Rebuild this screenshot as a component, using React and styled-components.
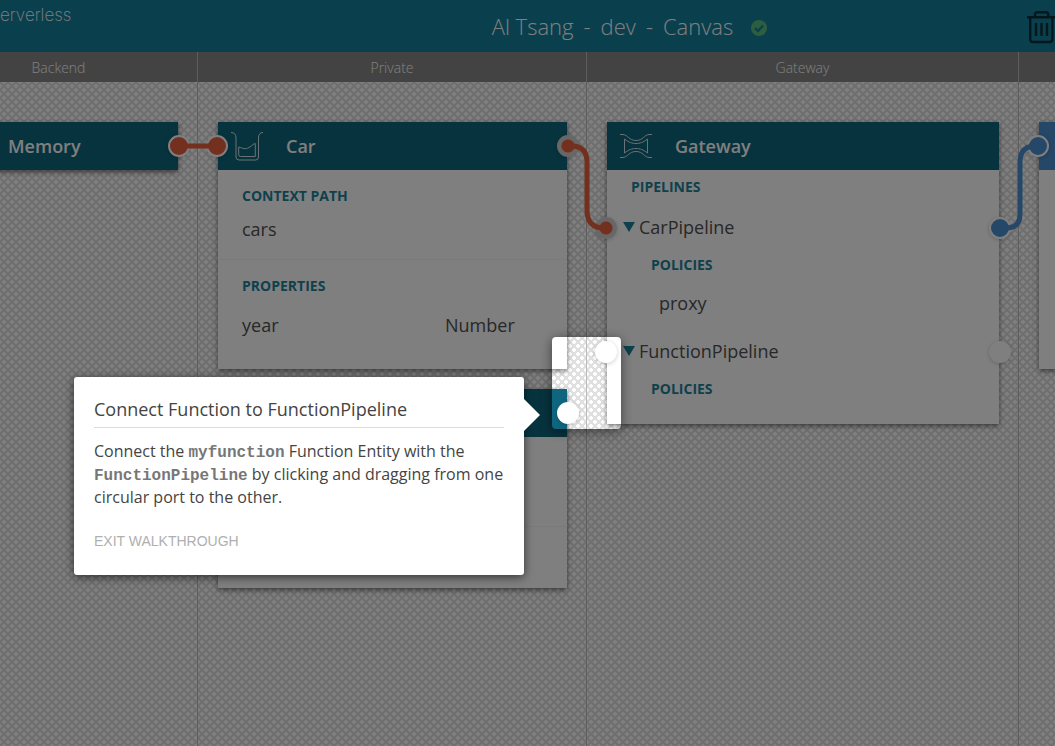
import React from "react";
import styled, { createGlobalStyle, css } from "styled-components";

const GlobalStyle = createGlobalStyle`
  *, *::before, *::after { box-sizing: border-box; }
  html, body { margin: 0; overflow: hidden; }
  body { font-family: "Open Sans", "Noto Sans", sans-serif; color: #505050; }
  button { font: inherit; color: inherit; background: none; border: 0; padding: 0; margin: 0; cursor: pointer; }
  h1, h2, h3, p, dl, dd { margin: 0; }
`;

const ORANGE = "#e6603e";
const BLUE = "#4a90d0";
const TEAL = "#0e667e";

const Page = styled.div`
  position: relative;
  min-height: 100vh;
  display: flex;
  flex-direction: column;
  overflow: hidden;
`;

const TopBar = styled.header`
  height: 52px;
  flex: none;
  display: grid;
  grid-template-columns: 1fr auto 1fr;
  align-items: center;
  background: #147f9b;
  color: #fff;
`;

const Brand = styled.span`
  font: 200 17px/20px Inter, sans-serif;
  align-self: start;
  margin-top: 5px;
`;

const Title = styled.h1`
  display: flex;
  align-items: center;
  gap: 10px;
  margin-left: 204px;
  font-size: 22px;
  line-height: 32px;
  font-weight: 300;
  svg { margin: 4px 0 0 8px; }
`;

const TrashButton = styled.button`
  justify-self: end;
  width: 28px;
  height: 32px;
  color: #06303b;
  svg { display: block; overflow: visible; }
`;

const Lanes = styled.main`
  position: relative;
  flex: 1;
  display: flex;
  margin-left: -80px;
`;

const Lane = styled.section`
  flex: ${(p) => (p.$width ? `0 0 ${p.$width}px` : "1 0 280px")};
  display: flex;
  flex-direction: column;
  border-right: 1px solid #bababa;
`;

const LaneTitle = styled.h2`
  flex: none;
  height: 30px;
  background: #868686;
  color: #fff;
  font-size: 14px;
  line-height: 32px;
  font-weight: 300;
  text-align: center;
`;

const LaneBody = styled.div`
  flex: 1;
  display: flex;
  flex-direction: column;
  gap: 20px;
  padding: 40px 19px 40px 20px;
  background-color: #fff;
  background-image:
    linear-gradient(45deg, #e0e0e0 12%, transparent 12% 38%, #e0e0e0 38% 62%, transparent 62% 88%, #e0e0e0 88%),
    linear-gradient(-45deg, #e0e0e0 12%, transparent 12% 38%, #e0e0e0 38% 62%, transparent 62% 88%, #e0e0e0 88%);
  background-size: 8px 8px;
`;

const Card = styled.article`
  background: #fff;
  box-shadow: 0 2px 5px rgba(0, 0, 0, 0.5);
`;

const CardHeader = styled.header`
  position: relative;
  height: 48px;
  display: grid;
  grid-template-columns: 55px 1fr;
  align-items: center;
  padding-left: 13px;
  background: ${(p) => p.$color || TEAL};
  color: #fff;
`;

const CardName = styled.h3`
  grid-column: 2;
  font-size: 18px;
  line-height: 24px;
  font-weight: 600;
`;

const CardIcon = styled.svg`
  display: block;
  fill: none;
  stroke: #d5e5e9;
  stroke-width: 1;
`;

const CardSection = styled.section`
  height: ${(p) => p.$height}px;
  padding: 14px 24px 0;
  & + & { border-top: 1px solid #f4f4f4; }
`;

const Label = styled.h3`
  font-size: 14px;
  line-height: 24px;
  font-weight: 700;
  color: #1c8399;
`;

const Value = styled.p`
  font-size: 18px;
  line-height: 24px;
  margin-top: 9px;
`;

const Property = styled.dl`
  display: grid;
  grid-template-columns: 203px 1fr;
  margin-top: 15px;
  font-size: 18px;
  line-height: 24px;
`;

const PipelineBody = styled.div`
  padding-bottom: 22px;
`;

const PipelinesLabel = styled(Label)`
  padding-left: 24px;
  line-height: 34px;
`;

const PipelineRow = styled.div`
  position: relative;
  height: 48px;
  padding: 0 0 2px 16px;
  display: flex;
  align-items: center;
`;

const PipelineToggle = styled.button`
  display: flex;
  align-items: center;
  gap: 4px;
  font-size: 18px;
  line-height: 24px;
  &::before {
    content: "";
    border: 6px solid transparent;
    border-top: 10px solid #1c8399;
    border-bottom: 0;
  }
`;

const PoliciesLabel = styled(Label)`
  padding-left: 44px;
  line-height: 26px;
`;

const Policy = styled.p`
  padding-left: 52px;
  font-size: 18px;
  line-height: 50px;
`;

const Port = styled.button`
  position: absolute;
  top: 50%;
  ${(p) => (p.$side === "left" ? "left: -12px;" : "right: -12px;")}
  width: 22px;
  height: 22px;
  margin-top: -11px;
  border-radius: 50%;
  background: #fff;
  box-shadow: 0 1px 4px rgba(0, 0, 0, 0.2);
  ${(p) => p.$fill && css`
    background: ${p.$fill};
    border: 2px solid #fff;
  `}
  ${(p) => p.$dot && css`
    background: radial-gradient(circle, ${p.$dot} 6px, #cfcfcf 7px);
  `}
`;

const Wires = styled.svg`
  position: absolute;
  top: 0;
  left: 80px;
  width: 100%;
  height: 100%;
  fill: none;
  stroke-width: 5;
  pointer-events: none;
`;

const Spotlight = styled.div`
  position: absolute;
  left: 552px;
  top: 337px;
  width: 69px;
  height: 92px;
  border-radius: 4px;
  pointer-events: none;
  box-shadow: 0 0 0 9999px rgba(0, 0, 0, 0.5), 0 2px 12px rgba(0, 0, 0, 0.5);
`;

const Popover = styled.aside`
  position: absolute;
  left: 74px;
  top: 377px;
  width: 450px;
  padding: 20px 20px 22px;
  border-radius: 3px;
  background: #fff;
  color: #444;
  box-shadow: 0 2px 10px rgba(0, 0, 0, 0.6);
  &::after {
    content: "";
    position: absolute;
    left: 100%;
    top: 22px;
    border: 16px solid transparent;
    border-left-color: #fff;
    border-right: 0;
  }
`;

const PopoverTitle = styled.h2`
  font-size: 18px;
  line-height: 24px;
  font-weight: 400;
  padding-bottom: 6px;
  border-bottom: 1px solid #ddd;
`;

const PopoverText = styled.p`
  margin-top: 12px;
  font-size: 16px;
  line-height: 23px;
  code { font: 700 16px/16px "Liberation Mono", monospace; color: #777; }
`;

const ExitButton = styled.button`
  display: block;
  margin-top: 20px;
  font: 500 14px/24px "Liberation Sans", sans-serif;
  color: #b0b0b0;
`;

function Pipeline({ name, policies = [], linked }) {
  return (
    <>
      <PipelineRow>
        <Port $side="left" $dot={linked && ORANGE} aria-label={`${name} input`} />
        <PipelineToggle>{name}</PipelineToggle>
        <Port $side="right" $fill={linked && BLUE} aria-label={`${name} output`} />
      </PipelineRow>
      <PoliciesLabel>POLICIES</PoliciesLabel>
      {policies.map((policy) => <Policy key={policy}>{policy}</Policy>)}
    </>
  );
}

export default function App() {
  return (
    <Page>
      <GlobalStyle />
      <TopBar>
        <Brand>erverless</Brand>
        <Title>
          <span>Al Tsang</span>
          <span>-</span>
          <span>dev</span>
          <span>-</span>
          <span>Canvas</span>
          <svg width="16" height="16" viewBox="0 0 16 16" aria-label="Saved">
            <circle cx="8" cy="8" r="8" fill="#58bd7f" />
            <path d="M4 8l3 3 5-5.5" fill="none" stroke="#147f9b" strokeWidth="2.4" />
          </svg>
        </Title>
        <TrashButton aria-label="Delete">
          <svg width="30" height="32" viewBox="0 0 30 32" fill="none" stroke="currentColor" strokeWidth="2.4">
            <path d="M0 7.2H30M8 7V4.5Q8 2.2 10.3 2.2H19Q21.3 2.2 21.3 4.5V7M3.2 7V29Q3.2 32 6.2 32H22.4Q25.4 32 25.4 29V7M9 13V26M14.5 13V26M20 13V26" />
          </svg>
        </TrashButton>
      </TopBar>

      <Lanes>
        <Lane $width={278}>
          <LaneTitle>Backend</LaneTitle>
          <LaneBody>
            <Card>
              <CardHeader>
                <CardName>Memory</CardName>
                <Port $side="right" $fill={ORANGE} aria-label="Memory output" />
              </CardHeader>
            </Card>
          </LaneBody>
        </Lane>

        <Lane $width={389}>
          <LaneTitle>Private</LaneTitle>
          <LaneBody>
            <Card>
              <CardHeader>
                <Port $side="left" $fill={ORANGE} aria-label="Car input" />
                <CardIcon width="32" height="29" viewBox="0 0 32 29">
                  <path d="M0 .5Q5 .5 5 6V25Q5 28 8 28H24.5Q27.5 28 27.5 25V6Q27.5 .5 32 .5" />
                  <path d="M7.7 15C12 16 14 18 18 15.5S22 12 24.3 11.5V24.5H9.5Q7.7 24.5 7.7 22.5Z" />
                </CardIcon>
                <CardName>Car</CardName>
                <Port $side="right" $dot={ORANGE} aria-label="Car output" />
              </CardHeader>
              <CardSection $height={89}>
                <Label>CONTEXT PATH</Label>
                <Value>cars</Value>
              </CardSection>
              <CardSection $height={110}>
                <Label>PROPERTIES</Label>
                <Property>
                  <dt>year</dt>
                  <dd>Number</dd>
                </Property>
              </CardSection>
            </Card>
            <Card>
              <CardHeader>
                <Port $side="right" aria-label="Function output" />
              </CardHeader>
              <CardSection $height={89} />
              <CardSection $height={62} />
            </Card>
          </LaneBody>
        </Lane>

        <Lane $width={432}>
          <LaneTitle>Gateway</LaneTitle>
          <LaneBody>
            <Card>
              <CardHeader>
                <CardIcon width="32" height="24" viewBox="0 0 32 24">
                  <path d="M0 .5H3C8 1 9 6.5 16 6.5S24 1 29 .5H32M0 23.5H3C8 23 9 17.5 16 17.5S24 23 29 23.5H32" />
                  <path d="M4.5 5C9 8.5 12 9.5 16 9.5S23 8.5 27.5 5V19C23 15.5 20 14.5 16 14.5S9 15.5 4.5 19Z" />
                </CardIcon>
                <CardName>Gateway</CardName>
              </CardHeader>
              <PipelineBody>
                <PipelinesLabel>PIPELINES</PipelinesLabel>
                <Pipeline name="CarPipeline" policies={["proxy"]} linked />
                <Pipeline name="FunctionPipeline" />
              </PipelineBody>
            </Card>
          </LaneBody>
        </Lane>

        <Lane>
          <LaneTitle />
          <LaneBody>
            <Card>
              <CardHeader $color={BLUE}>
                <Port $side="left" $fill={BLUE} aria-label="Public input" />
              </CardHeader>
              <CardSection $height={199} />
            </Card>
          </LaneBody>
        </Lane>

        <Wires aria-hidden="true">
          <path stroke={ORANGE} d="M179 94H218" />
          <path stroke={ORANGE} d="M568 94H573Q587 95 587 110V160Q588 175 602 176H606" />
          <path stroke={BLUE} d="M1000 176H1006Q1020 176 1020 162V110Q1020 95 1034 94H1038" />
        </Wires>
      </Lanes>

      <Spotlight />
      <Popover role="dialog" aria-labelledby="step-title">
        <PopoverTitle id="step-title">Connect Function to FunctionPipeline</PopoverTitle>
        <PopoverText>
          Connect the <code>myfunction</code> Function Entity with the <code>FunctionPipeline</code> by
          clicking and dragging from one circular port to the other.
        </PopoverText>
        <ExitButton>EXIT WALKTHROUGH</ExitButton>
      </Popover>
    </Page>
  );
}
